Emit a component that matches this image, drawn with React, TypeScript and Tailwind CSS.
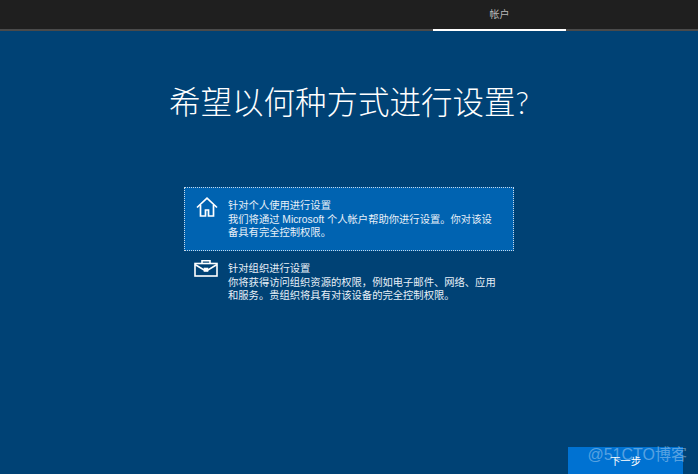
import React from 'react'

function HomeIcon() {
  return (
    <svg width="22" height="20" viewBox="0 0 22 20" fill="none" stroke="white" strokeWidth="1.7">
      <path d="M1 10.5 11 1.2l10 9.3" />
      <path d="M4.5 8v11h5v-6h3v6h5V8" />
    </svg>
  )
}

function BriefcaseIcon() {
  return (
    <svg width="24" height="17" viewBox="0 0 24 17" fill="none" stroke="white" strokeWidth="1.6">
      <rect x="1" y="3.5" width="22" height="12.5" />
      <path d="M8 3.5V.8h8v2.7" />
      <path d="M1 4.5l9 5.5h4l9-5.5" />
      <rect x="10.5" y="8.5" width="3" height="2.5" fill="white" />
    </svg>
  )
}

export default function App() {
  return (
    <div className="relative flex h-[474px] w-[698px] flex-col overflow-hidden bg-[#004275] font-['Liberation_Sans','Noto_Sans_CJK_SC',sans-serif] text-white">
      {/* top step bar */}
      <div className="flex h-[31px] shrink-0 justify-end border-b-2 border-[#4a4a4a] bg-[#1f1f1f] pr-[132px]">
        <div className="-mb-[2px] flex h-[31px] w-[133px] items-start justify-center border-b-2 border-white pt-[8px] text-[10px] leading-[14px] text-[#b8b8b8]">
          帐户
        </div>
      </div>

      <h1 className="mt-[48px] text-center text-[31.5px] leading-[46px] font-light text-white">
        希望以何种方式进行设置<span className="font-['Lato'] text-[31px] font-light">?</span>
      </h1>

      {/* options */}
      <div className="mx-auto mt-[61px] flex w-[330px] flex-col">
        <div className="flex h-[64px] gap-[10px] border border-dotted border-[#c8d8e8] bg-[#0063b1] pt-[9px] pl-[11px]">
          <div className="w-[22px] shrink-0">
            <HomeIcon />
          </div>
          <div className="w-[270px] pt-[2px] text-[10.3px] leading-[13.7px] text-[#e8f0f8]">
            <div>针对个人使用进行设置</div>
            <div>我们将通过 Microsoft 个人帐户帮助你进行设置。你对该设备具有完全控制权限。</div>
          </div>
        </div>
        <div className="mt-[9px] flex gap-[10px] pl-[10px]">
          <div className="w-[24px] shrink-0">
            <BriefcaseIcon />
          </div>
          <div className="w-[270px] pt-[2px] text-[10.3px] leading-[13.7px] text-[#e8f0f8]">
            <div>针对组织进行设置</div>
            <div>你将获得访问组织资源的权限，例如电子邮件、网络、应用和服务。贵组织将具有对该设备的完全控制权限。</div>
          </div>
        </div>
      </div>

      {/* footer */}
      <div className="mt-auto flex justify-end pr-[15px]">
        <div className="flex h-[27px] w-[115px] items-start justify-center bg-[#0072d2] pt-[8px] text-[10.4px] leading-[14px] text-white">
          下一步
        </div>
      </div>

      {/* watermark */}
      <div className="absolute right-[11px] bottom-[10px] text-[16px] leading-[18px] text-white/35">@51CTO博客</div>
    </div>
  )
}
